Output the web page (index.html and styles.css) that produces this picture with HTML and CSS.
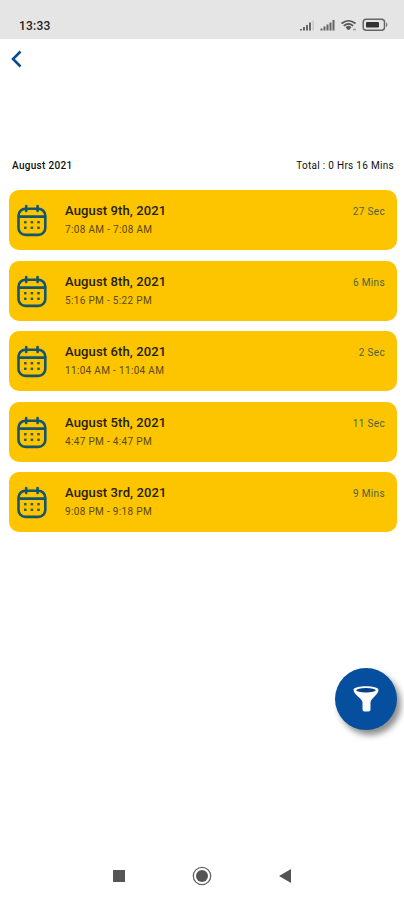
FILE: index.html
```html
<!DOCTYPE html>
<html lang="en">
<head>
<meta charset="UTF-8">
<meta name="viewport" content="width=device-width, initial-scale=1.0">
<title>Time Log</title>
<link rel="stylesheet" href="styles.css">
</head>
<body>

<svg class="sprite" width="0" height="0">
    <symbol id="calendar" viewBox="0 0 30 33">
        <g fill="none" stroke="#15566a" stroke-width="2.6" stroke-linecap="round">
            <rect x="1.5" y="4.7" width="26.8" height="26.2" rx="7"/>
            <path d="M2 12.6h26M9.2 2v5M20.6 2v5"/>
        </g>
        <g fill="#3b5a48">
            <rect x="7" y="17" width="2.6" height="2.4"/>
            <rect x="13.6" y="17" width="2.6" height="2.4"/>
            <rect x="20.2" y="17" width="2.6" height="2.4"/>
            <rect x="7" y="22.6" width="2.6" height="2.4"/>
            <rect x="13.6" y="22.6" width="2.6" height="2.4"/>
            <rect x="20.2" y="22.6" width="2.6" height="2.4"/>
        </g>
    </symbol>
</svg>

<div class="status-bar">
    <span class="clock">13:33</span>
    <svg class="status-icons" width="90" height="14" viewBox="0 0 90 14">
        <g fill="#666">
            <path d="M1 11h2v1.5H1zM4 9h2v3.5H4zM7 7h2v5.5H7zM10 4.500h2v8h-2z"/>
            <path d="M13.500 2.500h1.300v10h-1.300z" fill="#c4c4c4"/>
            <path d="M21.500 10.500h2v2h-2zM24.500 8.500h2v4h-2zM27.500 6.500h2v6h-2zM30.500 4.500h2v8h-2zM33.500 2h2v10.500h-2z"/>
        </g>
        <g fill="none" stroke="#555" stroke-width="1.700">
            <path d="M42.500 5.500q7-5.500 14 0M44.800 7.900q4.700-4 9.400 0"/>
            <path d="M47 9.200q2.500-2 5 0l-2.500 2.800z" fill="#555" stroke-width="1"/>
        </g>
        <path d="M54 11.500h3" stroke="#999" stroke-width="1.500"/>
        <rect x="64.200" y="1.200" width="21.300" height="11" rx="3" fill="none" stroke="#666" stroke-width="1.500"/>
        <rect x="67" y="4" width="13" height="5.500" rx="1" fill="#333"/>
        <path d="M87 4.300q2.800 2.500 0 5z" fill="#777"/>
    </svg>
</div>

<div class="top-nav">
    <svg width="12" height="18" viewBox="0 0 12 18">
        <path d="M10.500 1.500L3 9l7.500 7.500" fill="none" stroke="#064a91" stroke-width="2.500"/>
    </svg>
</div>

<div class="summary">
    <span class="month">August 2021</span>
    <span class="total">Total : 0 Hrs 16 Mins</span>
</div>

<div class="list">
    <div class="card">
        <svg class="calendar"><use href="#calendar"/></svg>
        <div class="info">
            <div class="date">August 9th, 2021</div>
            <div class="time">7:08 AM - 7:08 AM</div>
        </div>
        <div class="duration">27 Sec</div>
    </div>
    <div class="card">
        <svg class="calendar"><use href="#calendar"/></svg>
        <div class="info">
            <div class="date">August 8th, 2021</div>
            <div class="time">5:16 PM - 5:22 PM</div>
        </div>
        <div class="duration">6 Mins</div>
    </div>
    <div class="card">
        <svg class="calendar"><use href="#calendar"/></svg>
        <div class="info">
            <div class="date">August 6th, 2021</div>
            <div class="time">11:04 AM - 11:04 AM</div>
        </div>
        <div class="duration">2 Sec</div>
    </div>
    <div class="card">
        <svg class="calendar"><use href="#calendar"/></svg>
        <div class="info">
            <div class="date">August 5th, 2021</div>
            <div class="time">4:47 PM - 4:47 PM</div>
        </div>
        <div class="duration">11 Sec</div>
    </div>
    <div class="card">
        <svg class="calendar"><use href="#calendar"/></svg>
        <div class="info">
            <div class="date">August 3rd, 2021</div>
            <div class="time">9:08 PM - 9:18 PM</div>
        </div>
        <div class="duration">9 Mins</div>
    </div>
</div>

<button class="filter-button" aria-label="Filter">
    <svg width="26" height="28" viewBox="0 0 26 28">
        <path d="M0.500 5C0.500 0 25.500 0 25.500 5C25.500 9.500 17.500 13.500 17.500 17.500V24.500Q17.500 26.500 15.500 26.500H11.500Q9.500 26.500 9.500 24.500V17.500C9.500 13.500 0.500 9.500 0.500 5z" fill="#fff"/>
        <ellipse cx="13" cy="5.300" rx="9.800" ry="2.200" fill="#063f86"/>
    </svg>
</button>

<div class="android-nav">
    <svg width="12" height="12" viewBox="0 0 12 12"><rect width="12" height="12" fill="#555"/></svg>
    <svg width="20" height="20" viewBox="0 0 20 20">
        <circle cx="10" cy="10" r="8.700" fill="none" stroke="#666" stroke-width="1.300"/>
        <circle cx="10" cy="10" r="6" fill="#555"/>
    </svg>
    <svg width="12" height="14" viewBox="0 0 12 14"><path d="M12 0v14L0 7z" fill="#555"/></svg>
</div>

</body>
</html>
```
FILE: styles.css
```css
body {
    font-family: Roboto, sans-serif;
    margin: 0;
    height: 900px;
    display: flex;
    flex-direction: column;
    position: relative;
    overflow: hidden;
    background-color: #fff;
    color: #111;
}
.sprite {
    position: absolute;
}
.status-bar {
    height: 39px;
    box-sizing: border-box;
    padding: 11px 15px 0 19px;
    display: flex;
    justify-content: space-between;
    align-items: center;
    background-color: #e5e5e5;
}
.clock {
    font-size: 12px;
    font-weight: 500;
    letter-spacing: 0.2px;
    padding-top: 1px;
    color: #222;
}
.top-nav {
    height: 111px;
    box-sizing: border-box;
    padding: 11px 10px;
}
.top-nav svg {
    display: block;
}
.summary {
    height: 40px;
    box-sizing: border-box;
    padding: 9px 10px 0 12px;
    display: flex;
    justify-content: space-between;
    font-size: 10px;
    line-height: 14px;
    letter-spacing: 0.3px;
}
.month {
    font-weight: 500;
}
.list {
    padding: 0 7px 0 9px;
    display: flex;
    flex-direction: column;
    gap: 10.5px;
}
.card {
    height: 60px;
    box-sizing: border-box;
    padding: 0 12px 0 8px;
    display: flex;
    border-radius: 10px;
    background-color: #fdc500;
}
.calendar {
    width: 30px;
    height: 33px;
    margin: 14px 18px 0 0;
}
.info {
    flex: 1;
    padding-top: 12px;
}
.date {
    font-size: 13px;
    line-height: 18px;
    font-weight: 500;
    letter-spacing: 0.13px;
    color: #26200c;
}
.time {
    font-size: 10px;
    line-height: 14px;
    letter-spacing: 0.33px;
    margin-top: 3px;
    color: #5a4818;
}
.duration {
    padding-top: 15px;
    font-size: 10px;
    line-height: 14px;
    letter-spacing: 0.35px;
    color: #4f6244;
}
.filter-button {
    position: absolute;
    left: 335px;
    top: 668px;
    width: 62px;
    height: 62px;
    padding: 0;
    display: flex;
    justify-content: center;
    align-items: center;
    border: none;
    border-radius: 50%;
    background-color: #064e9e;
    box-shadow: 4px 5px 6px rgba(0, 0, 0, 0.45);
}
.android-nav {
    height: 48px;
    box-sizing: border-box;
    margin-top: auto;
    padding: 0 113px 0 113px;
    display: flex;
    justify-content: space-between;
    align-items: center;
}
```
